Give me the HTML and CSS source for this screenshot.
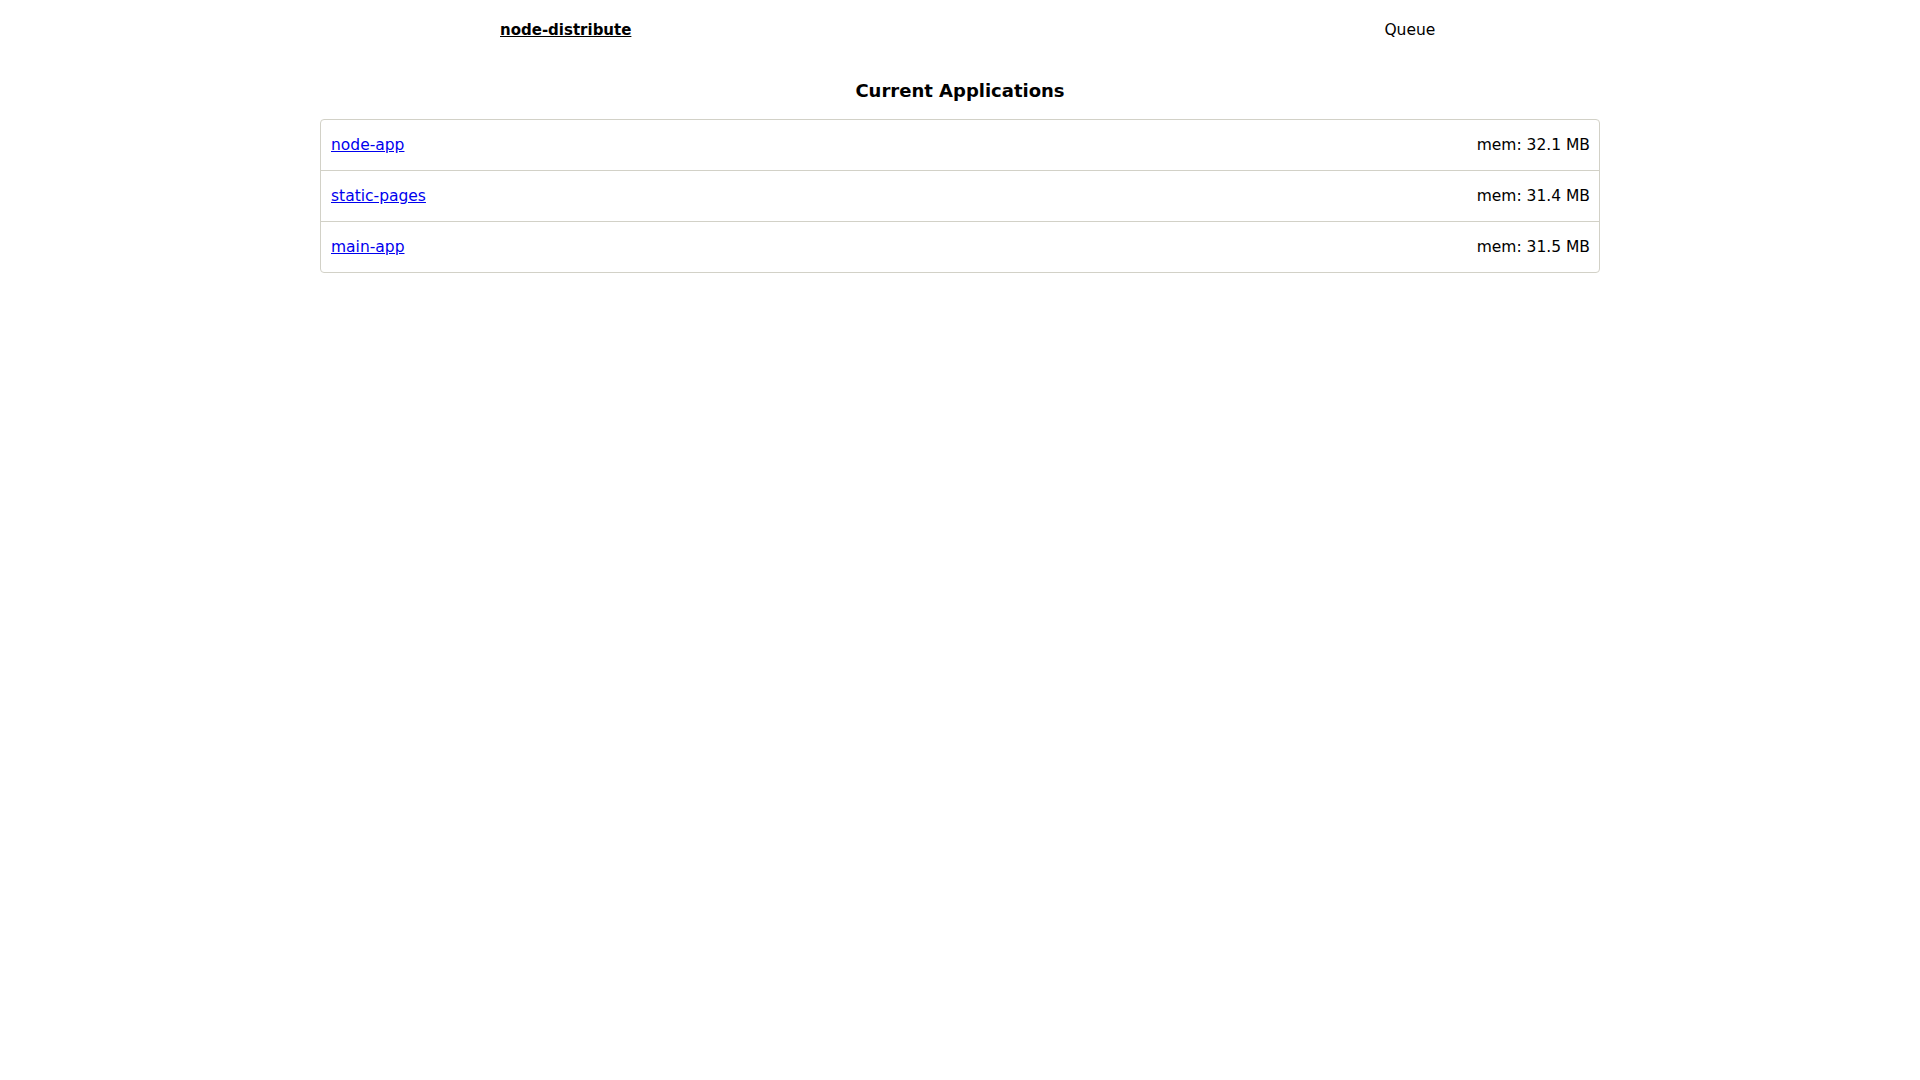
FILE: index.html
```html
<!DOCTYPE html>
<html lang="en">
<head>
<meta charset="utf-8">
<title>node-distribute</title>
<link rel="stylesheet" href="styles.css">
</head>
<body>
<nav class="nav">
  <a class="nav-brand" href="#">node-distribute</a>
  <a class="nav-link" href="#">Queue</a>
</nav>
<main class="content">
  <h2 class="title">Current Applications</h2>
  <ul class="app-list">
    <li class="app-row"><a class="app-link" href="#">node-app</a><span class="app-mem">mem: 32.1 MB</span></li>
    <li class="app-row"><a class="app-link" href="#">static-pages</a><span class="app-mem">mem: 31.4 MB</span></li>
    <li class="app-row"><a class="app-link" href="#">main-app</a><span class="app-mem">mem: 31.5 MB</span></li>
  </ul>
</main>
</body>
</html>
```

FILE: styles.css
```css
html, body {
  margin: 0;
  padding: 0;
  background: #fff;
}

body {
  font-family: "DejaVu Sans", "Liberation Sans", sans-serif;
  font-size: 15.5px;
  color: #000;
}

.nav {
  display: flex;
  align-items: center;
  padding: 20px 0 0 500px;
  line-height: 20px;
  gap: 753px;
}

.nav-brand {
  color: #000;
  font-weight: bold;
  font-size: 15px;
  text-decoration: underline;
}

.nav-link {
  color: #000;
  text-decoration: none;
}

.content {
  width: 1280px;
  margin: 0 auto;
}

.title {
  margin: 39px 0 16px;
  font-size: 18px;
  line-height: 24px;
  font-weight: bold;
  text-align: center;
}

.app-list {
  list-style: none;
  margin: 0;
  padding: 0;
  border: 1px solid #d2d1c7;
  border-radius: 4px;
}

.app-row {
  display: flex;
  justify-content: space-between;
  align-items: center;
  height: 50px;
  padding: 0 9px 0 10px;
  border-top: 1px solid #d2d1c7;
}

.app-row:first-child {
  border-top: none;
}

.app-link {
  color: #0000ee;
  text-decoration: underline;
}

.app-mem {
  color: #000;
}
```
